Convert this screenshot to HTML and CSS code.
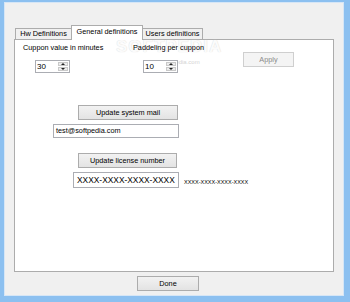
FILE: index.html
```html
<!DOCTYPE html>
<html lang="en">
<head>
    <meta charset="UTF-8">
    <meta name="viewport" content="width=device-width, initial-scale=1.0">
    <title>Settings</title>
    <link rel="stylesheet" href="styles.css">
</head>
<body>

    <div class="window">
        <div class="client">
            <div class="tab-strip">
                <div class="tab tab-hw">Hw Definitions</div>
                <div class="tab tab-active">General definitions</div>
                <div class="tab tab-users">Users definitions</div>
            </div>

            <div class="tab-page">
                <div class="watermark">SOFTPEDIA</div>
                <div class="watermark-url">www.softpedia.com</div>

                <div class="top-row">
                    <div class="col col-first">
                        <div class="label">Cuppon value in minutes</div>
                        <div class="spin spin-first">
                            <span class="spin-value">30</span>
                            <div class="spin-buttons">
                                <div class="spin-btn"><i class="arrow-up"></i></div>
                                <div class="spin-btn"><i class="arrow-down"></i></div>
                            </div>
                        </div>
                    </div>
                    <div class="col col-second">
                        <div class="label">Paddeling per cuppon</div>
                        <div class="spin spin-second">
                            <span class="spin-value">10</span>
                            <div class="spin-buttons">
                                <div class="spin-btn"><i class="arrow-up"></i></div>
                                <div class="spin-btn"><i class="arrow-down"></i></div>
                            </div>
                        </div>
                    </div>
                    <div class="col">
                        <button class="btn btn-apply" disabled>Apply</button>
                    </div>
                </div>

                <button class="btn btn-mail">Update system mail</button>
                <div class="textbox textbox-mail">test@softpedia.com</div>

                <button class="btn btn-license">Update license number</button>
                <div class="license-row">
                    <div class="textbox textbox-license">XXXX-XXXX-XXXX-XXXX</div>
                    <span class="license-hint">XXXX-XXXX-XXXX-XXXX</span>
                </div>
            </div>

            <div class="footer">
                <button class="btn btn-done">Done</button>
            </div>
        </div>
    </div>

</body>
</html>
```

FILE: styles.css
```css
body {
    margin: 0;
    font-family: "Liberation Sans", Arial, sans-serif;
    font-size: 7.3px;
    color: #000;
    background-color: #8cc0f0;
}
.window {
    width: 350px;
    height: 302px;
    box-sizing: border-box;
    border-style: solid;
    border-color: #8cc0f0;
    border-width: 2px 6px 6px 4px;
}
.client {
    height: 100%;
    box-sizing: border-box;
    border: 1px solid #d6e6f6;
    background-color: #f0f0f0;
    padding: 22px 9px 0 9px;
    display: flex;
    flex-direction: column;
}

/* tabs */
.tab-strip {
    display: flex;
    height: 14px;
    padding-left: 1px;
    position: relative;
    z-index: 1;
}
.tab {
    box-sizing: border-box;
    border: 1px solid #acacac;
    border-bottom: none;
    margin-top: 3px;
    height: 11px;
    line-height: 10px;
    background-color: #f0f0f0;
    text-align: center;
}
.tab-hw {
    width: 56px;
    border-right: none;
}
.tab-active {
    width: 72px;
    height: 15px;
    margin-top: 0;
    background-color: #fff;
    line-height: 12px;
}
.tab-users {
    width: 60px;
    border-left: none;
}
.tab-page {
    position: relative;
    height: 233px;
    box-sizing: border-box;
    border: 1px solid #acacac;
    background-color: #fff;
    padding-top: 3px;
}
.watermark {
    position: absolute;
    left: 101px;
    top: -3px;
    font-size: 17px;
    font-weight: bold;
    letter-spacing: 1px;
    color: #fbfbfb;
    text-shadow: 0 0 1px #d2d2d2;
}
.watermark-url {
    position: absolute;
    left: 133px;
    top: 19px;
    font-size: 6px;
    color: #d4d4d4;
}

/* first block */
.top-row {
    display: flex;
    padding-left: 8px;
    position: relative;
}
.col-first,
.col-second {
    width: 110px;
}
.label {
    height: 9px;
    line-height: 9px;
}
.spin {
    display: flex;
    width: 35px;
    height: 13px;
    box-sizing: border-box;
    margin-top: 8px;
    border: 1px solid #abadb3;
    background-color: #fff;
}
.spin-first {
    margin-left: 12px;
}
.spin-second {
    margin-left: 10px;
}
.spin-value {
    flex: 1;
    padding-left: 1px;
    font-size: 8px;
    line-height: 11px;
}
.spin-buttons {
    width: 10px;
    display: flex;
    flex-direction: column;
    padding: 1px 1px 1px 0;
    gap: 1px;
}
.spin-btn {
    flex: 1;
    border: 1px solid #c9c9c9;
    background-color: #ececec;
    display: flex;
    align-items: center;
    justify-content: center;
}
.arrow-up,
.arrow-down {
    width: 0;
    height: 0;
    border-left: 2px solid transparent;
    border-right: 2px solid transparent;
}
.arrow-up {
    border-bottom: 2px solid #222;
}
.arrow-down {
    border-top: 2px solid #222;
}

/* buttons */
.btn {
    display: block;
    box-sizing: border-box;
    padding: 0;
    font-family: "Liberation Sans", Arial, sans-serif;
    font-size: 7.3px;
    color: #000;
    border: 1px solid #acacac;
    border-radius: 0;
    background: linear-gradient(#f2f2f2, #e3e3e3);
}
.btn-apply {
    width: 51px;
    height: 15px;
    margin-top: 9px;
    color: #8a8a8a;
    border-color: #cfcfcf;
    background: #f4f4f4;
}
.btn-mail {
    width: 100px;
    height: 15px;
    margin-top: 32px;
    margin-left: 63px;
}
.btn-license {
    width: 99px;
    height: 15px;
    margin-top: 15px;
    margin-left: 63px;
}
.btn-done {
    width: 62px;
    height: 15px;
}

/* text boxes */
.textbox {
    box-sizing: border-box;
    border: 1px solid #abadb3;
    background-color: #fff;
    padding-left: 2px;
}
.textbox-mail {
    width: 126px;
    height: 14px;
    line-height: 12px;
    margin-top: 4px;
    margin-left: 38px;
}
.license-row {
    display: flex;
    align-items: center;
    margin-top: 4px;
    margin-left: 58px;
}
.textbox-license {
    width: 106px;
    height: 16px;
    line-height: 14px;
    font-size: 8.4px;
    padding-left: 3px;
}
.license-hint {
    margin-left: 5px;
    margin-top: 4px;
    font-size: 5.5px;
}

.footer {
    display: flex;
    justify-content: center;
    padding-top: 4px;
    padding-right: 12px;
}
```
